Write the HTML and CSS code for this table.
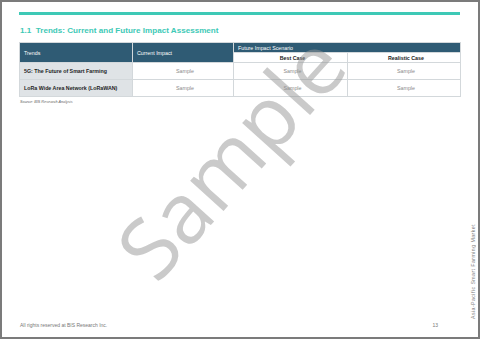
FILE: index.html
```html
<!DOCTYPE html>
<html>
<head>
<meta charset="utf-8">
<link rel="stylesheet" href="styles.css">
</head>
<body>
<div class="page">
  <div class="rule"></div>
  <h1 class="title">1.1&nbsp; Trends: Current and Future Impact Assessment</h1>
  <table class="impact">
    <colgroup>
      <col class="c1"><col class="c2"><col class="c3"><col class="c4">
    </colgroup>
    <thead>
      <tr class="h1">
        <th rowspan="2" class="lh">Trends</th>
        <th rowspan="2" class="lh">Current Impact</th>
        <th colspan="2" class="lh fut">Future Impact Scenario</th>
      </tr>
      <tr class="h2">
        <th class="sub">Best Case</th>
        <th class="sub">Realistic Case</th>
      </tr>
    </thead>
    <tbody>
      <tr>
        <td class="name">5G: The Future of Smart Farming</td>
        <td class="val">Sample</td>
        <td class="val">Sample</td>
        <td class="val">Sample</td>
      </tr>
      <tr>
        <td class="name">LoRa Wide Area Network (LoRaWAN)</td>
        <td class="val">Sample</td>
        <td class="val">Sample</td>
        <td class="val">Sample</td>
      </tr>
    </tbody>
  </table>
  <p class="source">Source: BIS Research Analysis</p>
  <div class="footer">
    <span>All rights reserved at BIS Research Inc.</span>
    <span>13</span>
  </div>
  <div class="side">Asia-Pacific Smart Farming Market</div>
  <div class="watermark">Sample</div>
</div>
</body>
</html>
```
FILE: styles.css
```css
html, body {
  margin: 0;
  padding: 0;
  background: #ffffff;
}
.page {
  position: relative;
  box-sizing: border-box;
  width: 480px;
  height: 339px;
  border: 2px solid #7b7b7b;
  padding: 10px 18px 0 17px;
  display: flex;
  flex-direction: column;
  font-family: "Liberation Sans", Arial, sans-serif;
  overflow: hidden;
}
.rule {
  height: 3px;
  width: 441px;
  background: #3ec9b6;
}
.title {
  margin: 11px 0 0 1px;
  font-size: 8.1px;
  line-height: 10px;
  font-weight: bold;
  color: #3ec9b6;
}
.impact {
  margin-top: 6px;
  width: 441px;
  border-collapse: collapse;
  table-layout: fixed;
  font-size: 5.3px;
}
.c1 { width: 113px; }
.c2 { width: 101px; }
.c3 { width: 114px; }
.c4 { width: 113px; }
.impact th, .impact td {
  padding: 0 0 0 4px;
  border: 1px solid #d3d8db;
}
.lh {
  background: #2f5b74;
  color: #ffffff;
  font-weight: normal;
  text-align: left;
  border-color: #4d7890;
  border-top-color: #2f5b74;
}
.h1 { height: 10px; }
.h2 { height: 10px; }
.fut { padding-left: 3px; }
.sub {
  background: #ffffff;
  color: #222;
  font-weight: bold;
  text-align: center;
  padding: 0;
}
.impact tbody tr { height: 17px; }
.name {
  background: #dfe3e6;
  font-weight: bold;
  color: #1e1e1e;
}
.val {
  text-align: center;
  color: #8a8a8a;
  padding: 0;
}
.source {
  margin: 3px 0 0 1px;
  font-size: 3.8px;
  font-style: italic;
  color: #666;
}
.footer {
  margin-top: auto;
  margin-bottom: 9px;
  margin-left: 1px;
  width: 418px;
  display: flex;
  justify-content: space-between;
  font-size: 5px;
  color: #777;
}
.side {
  position: absolute;
  right: 2px;
  bottom: 18px;
  writing-mode: vertical-rl;
  transform: rotate(180deg);
  font-size: 5.2px;
  letter-spacing: 0.45px;
  color: #7d7d7d;
}
.watermark {
  position: absolute;
  left: 228px;
  top: 154px;
  transform: translate(-50%, -50%) rotate(-48deg);
  font-family: "Open Sans", sans-serif;
  font-size: 84px;
  line-height: 1;
  color: rgba(150, 150, 150, 0.5);
  white-space: nowrap;
  pointer-events: none;
}
```
